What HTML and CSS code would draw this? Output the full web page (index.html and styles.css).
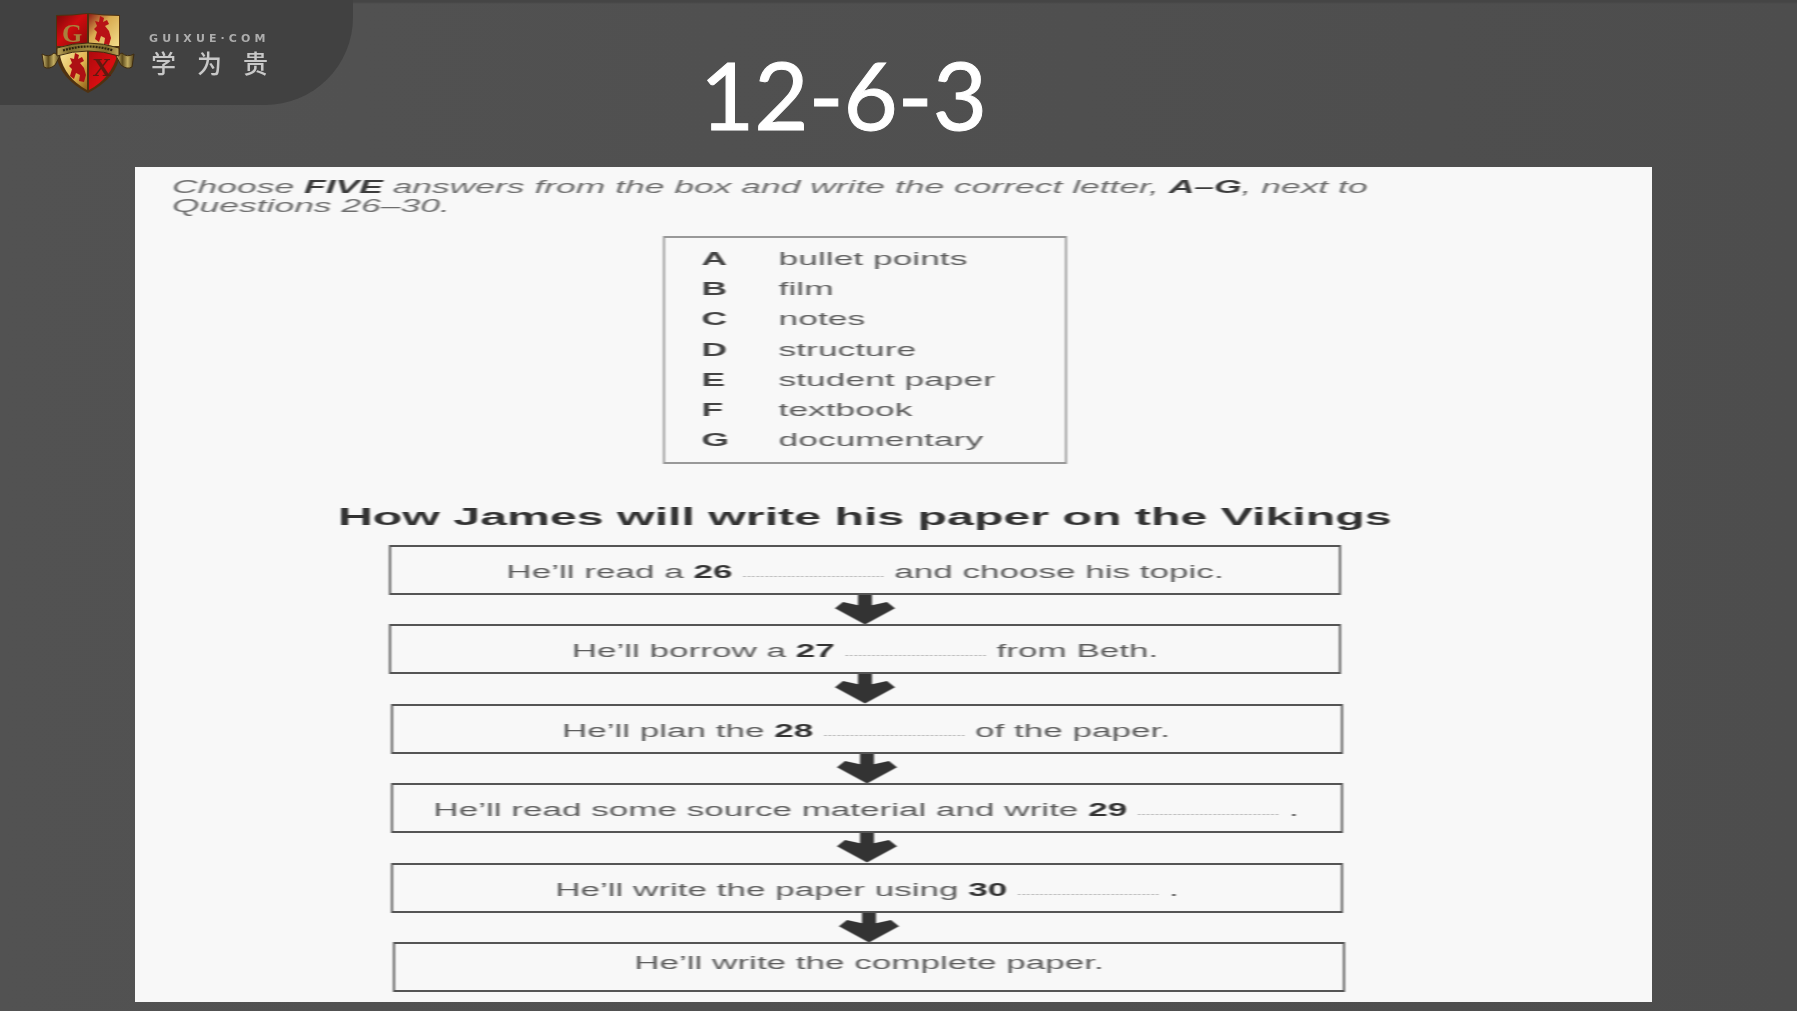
FILE: index.html
```html
<!DOCTYPE html>
<html lang="en">
<head>
<meta charset="utf-8">
<title>12-6-3</title>
<link rel="stylesheet" href="styles.css">
</head>
<body>
<div class="slide">
  <header class="header">
    <div class="brand">
      <svg class="crest" viewBox="0 0 94 82" aria-hidden="true">
        <defs>
          <linearGradient id="goldA" x1="0" y1="0" x2="1" y2="1"><stop offset="0" stop-color="#8f1d14"/><stop offset=".4" stop-color="#d9ab50"/><stop offset="1" stop-color="#f3dd8a"/></linearGradient>
          <linearGradient id="goldB" x1="0" y1="0" x2="1" y2="1"><stop offset="0" stop-color="#f8e8a0"/><stop offset=".6" stop-color="#e0b44e"/><stop offset="1" stop-color="#8f5f18"/></linearGradient>
          <linearGradient id="redA" x1="0" y1="0" x2="1" y2="1"><stop offset="0" stop-color="#7a0809"/><stop offset=".45" stop-color="#cf0c0f"/><stop offset="1" stop-color="#8a0909"/></linearGradient>
          <linearGradient id="redB" x1="0" y1="0" x2="1" y2="1"><stop offset="0" stop-color="#a90a0d"/><stop offset=".6" stop-color="#d90e11"/><stop offset="1" stop-color="#6c0808"/></linearGradient>
          <linearGradient id="scroll" x1="0" y1="0" x2="1" y2="0"><stop offset="0" stop-color="#c0a85c"/><stop offset=".2" stop-color="#7d6b2c"/><stop offset=".5" stop-color="#a08c40"/><stop offset=".8" stop-color="#7d6b2c"/><stop offset="1" stop-color="#c0a85c"/></linearGradient>
          <linearGradient id="tail" x1="0" y1="0" x2="1" y2="0"><stop offset="0" stop-color="#d9c67c"/><stop offset=".35" stop-color="#5c4a1c"/><stop offset=".65" stop-color="#c4ae62"/><stop offset="1" stop-color="#4a3a16"/></linearGradient>
          <path id="lion" d="M6 0 L10 2 L9 6 L13 4 L15 8 L11 10 L15 15 L17 22 L15 29 L10 28 L11 22 L7 20 L5 26 L1 23 L3 16 L0 13 L3 10 L1 5 L5 6 Z"/>
        </defs>
        <path d="M15 3 Q31 3 47 1 Q63 3 79 3 L79 42 Q76 66 47 81 Q18 66 15 42 Z" fill="#4f3110"/>
        <path d="M16 4 Q31 4 46 2 V34 H16 Z" fill="url(#redA)"/>
        <path d="M48 2 Q63 4 78 4 V34 H48 Z" fill="url(#goldA)"/>
        <path d="M19 36 H46 V78 Q24 66 19 44 Z" fill="url(#goldB)"/>
        <path d="M48 36 H76 V44 Q70 66 48 78 Z" fill="url(#redB)"/>
        <text x="31" y="30" class="crest-letter" fill="#a9813c">G</text>
        <use href="#lion" x="53" y="4" fill="#b81216"/>
        <use href="#lion" x="28" y="41" fill="#ad1014"/>
        <text x="61" y="64" class="crest-letter" fill="#5f1a10">X</text>
        <path d="M1 42 Q8 46 13 41 L19 44 L14 53 Q8 58 3 55 Z" fill="url(#tail)" stroke="#3f2c10" stroke-width="1"/>
        <path d="M93 42 Q86 46 81 41 L75 44 L80 53 Q86 58 91 55 Z" fill="url(#tail)" stroke="#3f2c10" stroke-width="1"/>
        <path d="M16 36 Q47 26 78 36 L78 44 Q47 34 16 44 Z" fill="url(#scroll)" stroke="#3f2c10" stroke-width="1"/>
        <path d="M22 38.5 Q47 30.5 72 38.5" fill="none" stroke="#2e230e" stroke-width="2.2" stroke-dasharray="2 1"/>
      </svg>
      <div class="brand-text">
        <div class="brand-url">GUIXUE·COM</div>
        <div class="brand-name">学为贵</div>
      </div>
    </div>
    <h1 class="title">12-6-3</h1>
  </header>
  <main class="paper">
    <div class="scan">
      <p class="intro"><i>Choose <b>FIVE</b> answers from the box and write the correct letter, <b>A–G</b>, next to<br>Questions 26–30.</i></p>
      <div class="options">
        <div class="option"><b>A</b><span>bullet points</span></div>
        <div class="option"><b>B</b><span>film</span></div>
        <div class="option"><b>C</b><span>notes</span></div>
        <div class="option"><b>D</b><span>structure</span></div>
        <div class="option"><b>E</b><span>student paper</span></div>
        <div class="option"><b>F</b><span>textbook</span></div>
        <div class="option"><b>G</b><span>documentary</span></div>
      </div>
      <h2 class="flow-title">How James will write his paper on the Vikings</h2>
      <div class="flow">
        <div class="step">He’ll read a <b>26</b> <span class="dots">................................</span> and choose his topic.</div>
        <svg class="arrow" viewBox="0 0 60 29" preserveAspectRatio="none" aria-hidden="true"><path d="M23 0 H37 V10 L52 7 L60 13 L30 29 L0 13 L8 7 L23 10 Z"/></svg>
        <div class="step">He’ll borrow a <b>27</b> <span class="dots">................................</span> from Beth.</div>
        <svg class="arrow" viewBox="0 0 60 29" preserveAspectRatio="none" aria-hidden="true"><path d="M23 0 H37 V10 L52 7 L60 13 L30 29 L0 13 L8 7 L23 10 Z"/></svg>
        <div class="step shift-1">He’ll plan the <b>28</b> <span class="dots">................................</span> of the paper.</div>
        <svg class="arrow shift-1" viewBox="0 0 60 29" preserveAspectRatio="none" aria-hidden="true"><path d="M23 0 H37 V10 L52 7 L60 13 L30 29 L0 13 L8 7 L23 10 Z"/></svg>
        <div class="step shift-1">He’ll read some source material and write <b>29</b> <span class="dots">................................</span> .</div>
        <svg class="arrow shift-2" viewBox="0 0 60 29" preserveAspectRatio="none" aria-hidden="true"><path d="M23 0 H37 V10 L52 7 L60 13 L30 29 L0 13 L8 7 L23 10 Z"/></svg>
        <div class="step shift-2">He’ll write the paper using <b>30</b> <span class="dots">................................</span> .</div>
        <svg class="arrow shift-3" viewBox="0 0 60 29" preserveAspectRatio="none" aria-hidden="true"><path d="M23 0 H37 V10 L52 7 L60 13 L30 29 L0 13 L8 7 L23 10 Z"/></svg>
        <div class="step step-last shift-3">He’ll write the complete paper.</div>
      </div>
    </div>
  </main>
</div>
</body>
</html>
```
FILE: styles.css
```css
* { box-sizing: border-box; }
html, body { margin: 0; padding: 0; height: 100%; overflow: hidden; }
body { background: #505050; font-family: "Liberation Sans", Arial, sans-serif; }
.slide {
  width: 1797px; height: 1011px;
  display: flex; flex-direction: column;
  background:
    linear-gradient(to bottom, #454545 0, #454545 2px, transparent 4px),
    linear-gradient(to right, #525252, #4d4d4d);
}

.header { height: 167px; display: flex; align-items: flex-start; flex: none; }
.brand {
  width: 353px; height: 105px; flex: none;
  background: #414141;
  border-bottom-right-radius: 88px;
  display: flex; align-items: flex-start;
  padding: 12px 0 0 41px;
}
.crest { width: 94px; height: 82px; flex: none; filter: blur(.4px); }
.crest-letter { font: bold 26px "Liberation Serif", serif; text-anchor: middle; }
.brand-text { margin: 20px 0 0 14px; color: #c8c8c8; filter: blur(.3px); }
.brand-url { font: bold 11px/13px "DejaVu Sans", sans-serif; letter-spacing: 4.1px; color: #adadad; white-space: nowrap; }
.brand-name { font: 500 25px/30px "Noto Sans CJK SC", sans-serif; letter-spacing: 21px; white-space: nowrap; margin-top: 2px; padding-left: 2px; }
.title {
  margin: 35px 0 0 347px;
  font: 400 93.7px/118px Lato, "Open Sans", sans-serif;
  -webkit-text-stroke: 1px #fff;
  color: #fff;
}

.paper { margin-left: 135px; width: 1517px; height: 835px; background: #f8f8f8; overflow: hidden; flex: none; }
.scan {
  width: 758.5px; height: 835px;
  transform: scaleX(2); transform-origin: left top;
  filter: blur(.5px);
  color: #5e5e5e;
  display: flow-root;
}
.scan b { color: #333; }
.intro { margin: 10.5px 0 0 18.5px; font-size: 17.73px; line-height: 19.5px; white-space: nowrap; color: #6e6e6e; }
.intro b { color: #3c3c3c; }
.options {
  margin: 19px 0 0 264px; width: 202px; height: 228px;
  border: solid #999; border-width: 2px 1px;
  padding: 7px 0 0 18.3px;
}
.option { display: flex; height: 30.2px; align-items: center; font-size: 17.7px; }
.option b { width: 38.5px; flex: none; color: #444; }

.flow-title { margin: 38px 0 0; padding-left: 101.5px; font-size: 24.15px; line-height: 30px; font-weight: bold; color: #333; white-space: nowrap; }
.flow { margin: 13px 0 0 127px; width: 480px; display: flex; flex-direction: column; align-items: flex-start; }
.step {
  width: 476px; height: 50px; flex: none;
  border: solid #555; border-width: 2px 1px;
  text-align: center;
  font-size: 17.55px; line-height: 50px; white-space: nowrap;
}
.step-last { line-height: 39px; }
.dots { font-size: 8px; color: #666; line-height: 1; vertical-align: 1.5px; }
.arrow { display: block; width: 30px; height: 29.5px; flex: none; margin-left: 223px; fill: #333; }
.step.shift-1 { margin-left: .5px; }
.step.shift-2 { margin-left: 1px; }
.step.shift-3 { margin-left: 2px; }
.arrow.shift-1 { margin-left: 223.5px; }
.arrow.shift-2 { margin-left: 224px; }
.arrow.shift-3 { margin-left: 225px; }
```
